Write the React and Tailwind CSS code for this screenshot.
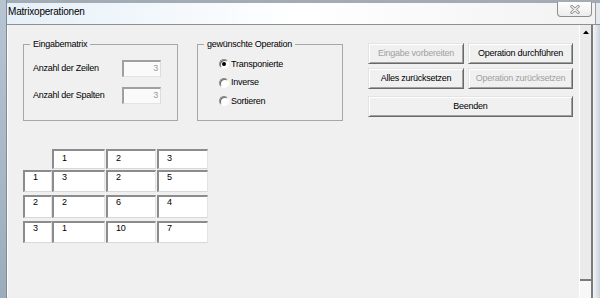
const Btn = ({ children, disabled, className = '' }) => (
  <button
    className={`h-[21px] flex items-center justify-center border border-t-[#e3e3e3] border-l-[#e3e3e3] border-r-[#696969] border-b-[#696969] bg-[#f0f0f0] shadow-[inset_1px_1px_0_#ffffff,inset_-1px_-1px_0_#a0a0a0] ${
      disabled ? 'text-[#a0a0a0]' : 'text-black'
    } ${className}`}
  >
    {children}
  </button>
)

const Radio = ({ checked, label }) => (
  <div className="flex items-center h-[18.5px] gap-[2px]">
    <span className="w-[10px] h-[10px] rounded-full border border-t-[#8a8a8a] border-l-[#8a8a8a] border-r-white border-b-white bg-white shadow-[inset_1px_1px_0_#6a6a6a] flex items-center justify-center">
      {checked && <span className="w-[4px] h-[4px] rounded-full bg-black" />}
    </span>
    <span>{label}</span>
  </div>
)

const Cell = ({ children, className = '' }) => (
  <div
    className={`h-full border-t-2 border-l-2 border-r border-b border-t-[#8c8c8c] border-l-[#8c8c8c] border-r-[#e3e3e3] border-b-[#d8d8d8] bg-white pl-[8px] ${className}`}
  >
    {children}
  </div>
)

const colWidths = ['w-[53px]', 'w-[50px]', 'w-[51px]']

const rows = [
  { label: '1', values: ['3', '2', '5'], cls: 'h-[22px] mt-[1px]' },
  { label: '2', values: ['2', '6', '4'], cls: 'h-[23px] mt-[3px]' },
  { label: '3', values: ['1', '10', '7'], cls: 'h-[22px] mt-[3px]' }
]

export default function App() {
  return (
    <div className="w-[600px] h-[298px] flex overflow-hidden font-['Liberation_Sans',Arial,sans-serif] text-[9px] leading-[11px] tracking-[-0.25px] text-black">
      {/* left window frame */}
      <div className="w-[7px] border-r border-r-[#7e8b97] bg-gradient-to-b from-[#b7c5d3] to-[#9badbd]" />

      <div className="flex-1 flex flex-col">
        {/* title bar */}
        <div className="h-[25px] flex border-t-[3px] border-t-[#a3acb5] border-b border-b-[#8f8f8f] bg-gradient-to-r from-[#e6f0f8] via-white to-[#f2f2f2]">
          <div className="flex-1 flex items-start justify-between border-r border-r-[#9c9c9c]">
            <span className="pl-[1px] pt-[3px] text-[10px] leading-[12px] tracking-[-0.2px]">Matrixoperationen</span>
            <div className="-mt-[1px] mr-[3px] w-[35px] h-[15px] border border-t-0 border-[#8d8d8d] rounded-b-[4px] bg-gradient-to-b from-white to-[#ececec] flex items-center justify-center">
              <svg width="10" height="9" viewBox="0 0 10 9">
                <path d="M1.8 1.5 L8.2 7.5 M8.2 1.5 L1.8 7.5" stroke="#8a8a8a" strokeWidth="3" strokeLinecap="round" />
                <path d="M1.8 1.5 L8.2 7.5 M8.2 1.5 L1.8 7.5" stroke="#f6f6f6" strokeWidth="1.2" strokeLinecap="round" />
              </svg>
            </div>
          </div>
          <div className="w-[4px] bg-[#e3e9ee]" />
        </div>

        {/* body */}
        <div className="flex-1 flex min-h-0">
          <div className="flex-1 bg-[#f0f0f0] border-l border-l-white">
            <div className="flex items-start pl-[15px] pt-[14px]">
              {/* Eingabematrix */}
              <fieldset className="w-[155px] h-[82px] border border-[#a7a7a7]">
                <legend className="ml-[6px] px-[3px] leading-[11px]">Eingabematrix</legend>
                <div className="flex flex-col gap-[10px] pt-[10px] pl-[9px] pr-[16px]">
                  {['Anzahl der Zeilen', 'Anzahl der Spalten'].map((l) => (
                    <div key={l} className="flex items-center justify-between h-[17px]">
                      <span>{l}</span>
                      <div className="w-[39px] h-[17px] border-t-2 border-l-2 border-r border-b border-t-[#a0a0a0] border-l-[#a0a0a0] border-r-[#dcdcdc] border-b-[#e3e3e3] bg-[#fafafa] text-right pr-[2px] leading-[13px] text-[#9a9a9a]">
                        3
                      </div>
                    </div>
                  ))}
                </div>
              </fieldset>

              {/* gewünschte Operation */}
              <fieldset className="ml-[19px] w-[146px] h-[82px] border border-[#a7a7a7]">
                <legend className="ml-[6px] px-[3px] leading-[11px]">gewünschte Operation</legend>
                <div className="pt-[5px] pl-[21px]">
                  <Radio checked label="Transponierte" />
                  <Radio label="Inverse" />
                  <Radio label="Sortieren" />
                </div>
              </fieldset>

              {/* buttons */}
              <div className="ml-[25px] mt-[4px] grid grid-cols-[96px_105px] gap-x-[4px] gap-y-[4px]">
                <Btn disabled>Eingabe vorbereiten</Btn>
                <Btn>Operation durchführen</Btn>
                <Btn>Alles zurücksetzen</Btn>
                <Btn disabled>Operation zurücksetzen</Btn>
                <Btn className="col-span-2 mt-[3px]">Beenden</Btn>
              </div>
            </div>

            {/* matrix */}
            <div className="mt-[28px] pl-[15px] flex flex-col">
              <div className="flex h-[20px]">
                <div className="w-[29px]" />
                <div className="flex gap-[1px]">
                  {['1', '2', '3'].map((h, i) => (
                    <Cell key={h} className={`${colWidths[i]} pt-[2px]`}>
                      {h}
                    </Cell>
                  ))}
                </div>
              </div>
              {rows.map((r) => (
                <div key={r.label} className={`flex ${r.cls}`}>
                  <Cell className="w-[29px]">{r.label}</Cell>
                  <div className="flex gap-[1px]">
                    {r.values.map((v, i) => (
                      <Cell key={i} className={colWidths[i]}>
                        {v}
                      </Cell>
                    ))}
                  </div>
                </div>
              ))}
            </div>
          </div>

          {/* scrollbar */}
          <div className="w-[12px] flex flex-col bg-[#ebebeb] border-l border-l-white">
            <div className="h-[13px] flex justify-center pt-[5px]">
              <svg width="6" height="4" viewBox="0 0 6 4">
                <path d="M0 4 L3 0.5 L6 4 Z" fill="#000" />
              </svg>
            </div>
            <div className="flex-1" />
            <div className="h-[2px] bg-[#7a7a7a]" />
            <div className="h-[17px] bg-[#f7f7f7]" />
          </div>
          <div className="w-[2px] bg-[#7b7b7b]" />
          <div className="w-[7px] bg-gradient-to-r from-[#f3f5f7] to-[#c9d3dc]" />
        </div>
      </div>
    </div>
  )
}
